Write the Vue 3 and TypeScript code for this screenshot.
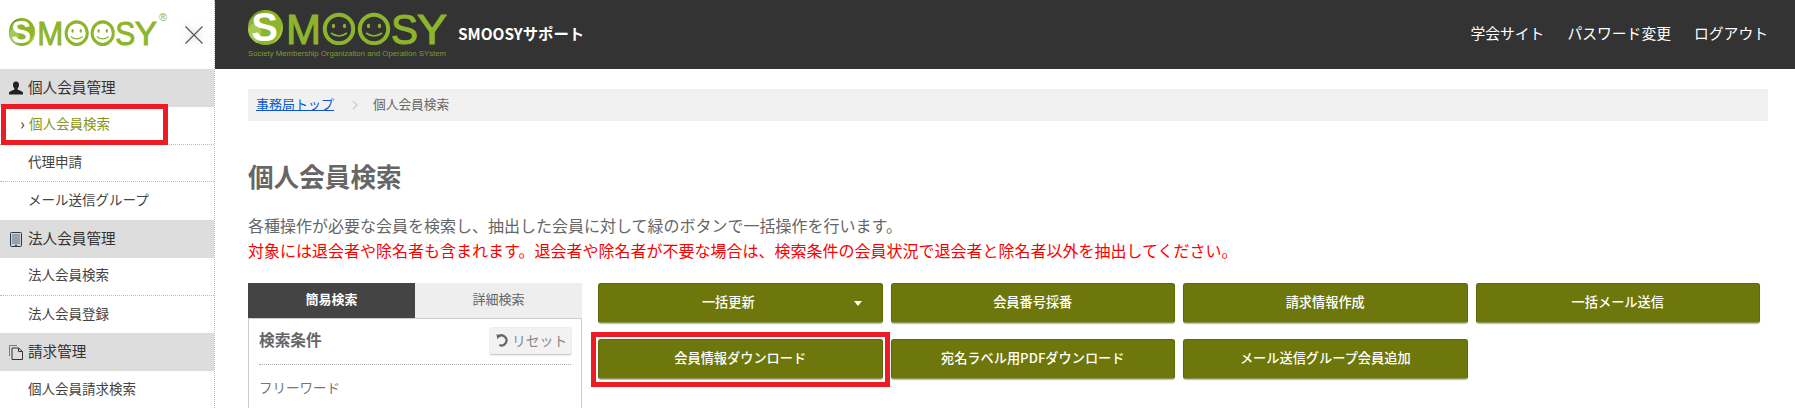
<script setup lang="ts">
interface MenuGroup {
  title: string
  icon: 'user' | 'tablet' | 'file'
  items: { label: string; active?: boolean }[]
}

const menu: MenuGroup[] = [
  {
    title: '個人会員管理',
    icon: 'user',
    items: [{ label: '個人会員検索', active: true }, { label: '代理申請' }, { label: 'メール送信グループ' }]
  },
  {
    title: '法人会員管理',
    icon: 'tablet',
    items: [{ label: '法人会員検索' }, { label: '法人会員登録' }]
  },
  {
    title: '請求管理',
    icon: 'file',
    items: [{ label: '個人会員請求検索' }]
  }
]

const navLinks = ['学会サイト', 'パスワード変更', 'ログアウト']

const actions = [
  { label: '一括更新', caret: true },
  { label: '会員番号採番' },
  { label: '請求情報作成' },
  { label: '一括メール送信' },
  { label: '会員情報ダウンロード', marked: true },
  { label: '宛名ラベル用PDFダウンロード' },
  { label: 'メール送信グループ会員追加' }
]
</script>

<template>
  <div class="page">
    <svg class="defs" width="0" height="0" aria-hidden="true">
      <defs>
        <symbol id="smoosy-mark" viewBox="0 0 199 35" preserveAspectRatio="none">
          <circle cx="17.5" cy="17.5" r="17.5" fill="#8db52c" />
          <path d="M1 12 C6 5 11 3 17 1 C9 0 1 6 0 16 Z" fill="#6f9420" />
          <path d="M0 19 C4 12 9 12 13 20 C14 27 11 31 9 33 C3 30 0 25 0 19 Z" fill="#a8c94e" />
          <path d="M24 34 C30 28 34 22 34 12 C36 22 32 31 24 34 Z" fill="#a8c94e" />
          <text class="logo-s" x="16.5" y="31" text-anchor="middle">S</text>
          <text class="logo-letter" x="38" y="34" textLength="35" lengthAdjust="spacingAndGlyphs">M</text>
          <g fill="none" stroke="#8db52c">
            <circle cx="91" cy="19" r="14.2" stroke-width="4" />
            <circle cx="126" cy="19" r="14.2" stroke-width="4" />
            <path d="M83 23 Q91 29 99 23" stroke-width="1.6" />
            <path d="M118 23 Q126 29 134 23" stroke-width="1.6" />
          </g>
          <g fill="#8db52c">
            <ellipse cx="85.5" cy="16" rx="1.6" ry="2.3" />
            <ellipse cx="96.5" cy="16" rx="1.6" ry="2.3" />
            <ellipse cx="120.5" cy="16" rx="1.6" ry="2.3" />
            <ellipse cx="131.5" cy="16" rx="1.6" ry="2.3" />
          </g>
          <text class="logo-letter" x="143" y="34" textLength="27" lengthAdjust="spacingAndGlyphs">S</text>
          <text class="logo-letter" x="169" y="34" textLength="30" lengthAdjust="spacingAndGlyphs">Y</text>
        </symbol>
      </defs>
    </svg>

    <aside class="sidebar">
      <div class="sidebar__top">
        <div class="sidebar__logo">
          <svg class="sidebar__mark" width="148" height="28"><use href="#smoosy-mark" width="148" height="28" /></svg>
          <span class="sidebar__reg">®</span>
        </div>
        <svg class="sidebar__close" width="18" height="18" viewBox="0 0 18 18">
          <path d="M0.5 0.5 L17.5 17.5 M17.5 0.5 L0.5 17.5" stroke="#555" stroke-width="1.1" fill="none" />
        </svg>
      </div>

      <section v-for="group in menu" :key="group.title">
        <h3 class="group">
          <svg v-if="group.icon === 'user'" class="group__icon" width="14" height="14" viewBox="0 0 14 14">
            <path d="M7 0.5 C9.2 0.5 10.2 2.2 10 4.2 C9.9 5.8 9.2 6.9 8.6 7.6 L8.8 8.8 C10.8 9.6 13.4 10.2 14 11.6 L14 13.5 L0 13.5 L0 11.6 C0.6 10.2 3.2 9.6 5.2 8.8 L5.4 7.6 C4.8 6.9 4.1 5.8 4 4.2 C3.8 2.2 4.8 0.5 7 0.5 Z" fill="#222" />
          </svg>
          <svg v-else-if="group.icon === 'tablet'" class="group__icon" width="14" height="15" viewBox="0 0 14 15">
            <rect x="1.5" y="0.5" width="11" height="14" rx="1" fill="#cdd2d6" stroke="#2a3a48" />
            <rect x="3" y="2" width="8" height="10" fill="#9aa2a8" />
            <rect x="6" y="12.6" width="2" height="1.2" fill="#2a3a48" />
          </svg>
          <svg v-else class="group__icon" width="14" height="15" viewBox="0 0 14 15">
            <path d="M0.5 11 L0.5 0.5 L8 0.5" fill="none" stroke="#8a7a66" stroke-width="1" />
            <path d="M3 14.5 L3 3 L9.5 3 L13.5 6.5 L13.5 14.5 Z M9.5 3 L9.5 6.5 L13.5 6.5" fill="none" stroke="#333" stroke-width="1" />
          </svg>
          <span class="group__title">{{ group.title }}</span>
        </h3>
        <ul class="menu">
          <li v-for="item in group.items" :key="item.label" :class="['menu__item', { 'is-active': item.active }]">
            <span v-if="item.active" class="menu__chevron">›</span>
            <span class="menu__label">{{ item.label }}</span>
            <span v-if="item.active" class="marker marker--menu"></span>
          </li>
        </ul>
      </section>
    </aside>

    <div class="body">
      <header class="topbar">
        <div class="topbar__brand">
          <div class="topbar__logo">
            <svg width="199" height="35"><use href="#smoosy-mark" width="199" height="35" /></svg>
            <span class="topbar__tagline">Society Membership Organization and Operation SYstem</span>
          </div>
          <span class="topbar__name">SMOOSYサポート</span>
        </div>
        <nav class="topbar__nav">
          <a v-for="link in navLinks" :key="link">{{ link }}</a>
        </nav>
      </header>

      <main class="content">
        <div class="crumbs">
          <a class="crumbs__link">事務局トップ</a>
          <svg class="crumbs__sep" width="6" height="10" viewBox="0 0 6 10">
            <path d="M1 1 L5 5 L1 9" fill="none" stroke="#ccc" stroke-width="1.4" />
          </svg>
          <span class="crumbs__current">個人会員検索</span>
        </div>

        <h1 class="title">個人会員検索</h1>
        <p class="lead">各種操作が必要な会員を検索し、抽出した会員に対して緑のボタンで一括操作を行います。</p>
        <p class="lead lead--warn">対象には退会者や除名者も含まれます。退会者や除名者が不要な場合は、検索条件の会員状況で退会者と除名者以外を抽出してください。</p>

        <div class="search">
          <div class="search__side">
            <div class="tabs">
              <div class="tabs__tab is-current">簡易検索</div>
              <div class="tabs__tab">詳細検索</div>
            </div>
            <div class="panel">
              <div class="panel__head">
                <span class="panel__title">検索条件</span>
                <button class="reset">
                  <svg width="13" height="13" viewBox="0 0 13 13">
                    <path d="M2.2 2.6 A5 5 0 1 1 3.4 11" fill="none" stroke="#666" stroke-width="2.2" />
                    <path d="M0.4 0.6 L5.4 0.8 L1.4 5.2 Z" fill="#666" />
                  </svg>
                  リセット
                </button>
              </div>
              <div class="panel__label">フリーワード</div>
            </div>
          </div>

          <div class="actions">
            <button v-for="action in actions" :key="action.label" class="action">
              <span class="action__label">{{ action.label }}</span>
              <span v-if="action.caret" class="action__caret"></span>
              <span v-if="action.marked" class="marker marker--action"></span>
            </button>
          </div>
        </div>
      </main>
    </div>
  </div>
</template>

<style>
html,
body {
  margin: 0;
  height: 408px;
  overflow: hidden;
  background: #fff;
}
</style>

<style scoped>
.page {
  display: flex;
  height: 408px;
  overflow: hidden;
  font-family: "Noto Sans CJK JP", "Noto Sans", sans-serif;
  color: #666;
}

.defs {
  position: absolute;
}

.logo-s {
  font-family: "Liberation Sans", sans-serif;
  font-weight: 700;
  font-size: 40px;
  fill: #fff;
}

.logo-letter {
  font-family: "Liberation Sans", sans-serif;
  font-size: 42px;
  fill: #8db52c;
  stroke: #8db52c;
  stroke-width: 1.1px;
}

.sidebar {
  flex: 0 0 215px;
  box-sizing: border-box;
  border-right: 1px dotted #bbb;
}

.sidebar__top {
  display: flex;
  align-items: center;
  justify-content: space-between;
  height: 69px;
  padding: 0 11px 0 9px;
  box-sizing: border-box;
}

.sidebar__logo {
  position: relative;
  display: flex;
  margin-top: -5px;
}

.sidebar__reg {
  position: absolute;
  top: -7px;
  left: 150px;
  font: 11px "Liberation Sans", sans-serif;
  color: #8db52c;
}

.sidebar__close {
  margin-top: 1px;
  filter: drop-shadow(0 0 3px rgba(0, 0, 0, 0.25));
}

.group {
  display: flex;
  align-items: center;
  gap: 5px;
  height: 38px;
  margin: 0;
  padding-left: 9px;
  box-sizing: border-box;
  background: #ddd;
  font-size: 14.6px;
  font-weight: 400;
  color: #333;
}

.group__icon {
  flex: none;
}

.group__title {
  margin-bottom: 3px;
}

.menu {
  list-style: none;
  margin: 0;
  padding: 0;
}

.menu__item {
  position: relative;
  display: flex;
  align-items: center;
  height: 37.7px;
  padding-left: 28px;
  box-sizing: border-box;
  border-bottom: 1px dotted #bbb;
  font-size: 13.5px;
  color: #444;
}

.menu__item:last-child {
  border-bottom: 0;
}

.menu__label {
  margin-bottom: 4px;
}

.menu__item.is-active {
  color: #8a9410;
}

.menu__item.is-active .menu__label {
  margin-left: 1px;
}

.menu__chevron {
  position: absolute;
  left: 20px;
  top: 4px;
  font-size: 16px;
  color: #445;
}

.marker {
  position: absolute;
  box-sizing: border-box;
  border: 5px solid #ed1c24;
  pointer-events: none;
}

.marker--menu {
  left: 1px;
  top: -3px;
  width: 167px;
  height: 41px;
}

.marker--action {
  inset: -8px -8px -9px -8px;
}

.body {
  flex: 1;
  min-width: 0;
}

.topbar {
  display: flex;
  align-items: center;
  justify-content: space-between;
  height: 69px;
  padding: 0 27px 0 33px;
  background: #333;
  color: #fff;
}

.topbar__brand {
  display: flex;
  align-items: center;
  gap: 11px;
}

.topbar__logo {
  display: flex;
  flex-direction: column;
}

.topbar__tagline {
  width: 199px;
  margin-top: 3px;
  font: 7.8px/11px "Liberation Sans", sans-serif;
  color: #7f9a2c;
  white-space: nowrap;
}

.topbar__name {
  margin-top: -4px;
  font-size: 15.4px;
  font-weight: 700;
}

.topbar__nav {
  display: flex;
  gap: 23px;
  margin-top: -5px;
  font-size: 14.8px;
}

.content {
  padding: 20px 27px 0 33px;
}

.crumbs {
  display: flex;
  align-items: center;
  height: 32px;
  padding: 0 0 3px 8px;
  box-sizing: border-box;
  background: #f1f1f1;
  font-size: 13px;
  color: #666;
}

.crumbs__link {
  color: #0b57d0;
  text-decoration: underline;
}

.crumbs__sep {
  margin: 3px 15px 0 18px;
}

.crumbs__current {
  font-size: 12.7px;
}

.title {
  margin: 39px 0 0;
  font-size: 25.6px;
  line-height: 32px;
  font-weight: 700;
  color: #666;
}

.lead {
  margin: 0;
  font-size: 16px;
  line-height: 25px;
  white-space: nowrap;
}

.title + .lead {
  margin-top: 21px;
}

.lead--warn {
  color: #f00;
}

.search {
  display: grid;
  grid-template-columns: 334px 1fr;
  column-gap: 16px;
  margin-top: 20px;
}

.tabs {
  display: grid;
  grid-template-columns: 167px 167px;
}

.tabs__tab {
  display: flex;
  align-items: center;
  justify-content: center;
  height: 35px;
  padding-bottom: 4px;
  box-sizing: border-box;
  background: #eee;
  font-size: 13px;
  color: #666;
}

.tabs__tab.is-current {
  background: #444;
  color: #fff;
  font-weight: 700;
}

.panel {
  height: 90px;
  padding: 9px 10px 0 10px;
  border: 1px solid #ccc;
}

.panel__head {
  display: flex;
  align-items: center;
  justify-content: space-between;
  padding-bottom: 9px;
  border-bottom: 1px dotted #aaa;
}

.panel__title {
  margin-bottom: 4px;
  font-size: 15.7px;
  font-weight: 700;
}

.reset {
  display: flex;
  align-items: center;
  gap: 3px;
  height: 27px;
  width: 81px;
  padding: 0 0 2px 6px;
  border: 0;
  border-bottom: 1px solid #ccc;
  border-radius: 2px;
  background: #f2f2f2;
  box-shadow: 0 0 0 1px #eee;
  font-family: inherit;
  font-size: 13.8px;
  color: #888;
}

.panel__label {
  margin-top: 12px;
  font-size: 13.5px;
  color: #777;
}

.actions {
  display: grid;
  grid-template-columns: repeat(4, 1fr);
  grid-auto-rows: 40px;
  gap: 16px 8px;
  padding-right: 8px;
  align-content: start;
}

.action {
  position: relative;
  display: flex;
  align-items: center;
  padding: 0 20px 3px;
  border: 1px solid #5f6708;
  border-bottom-color: #8d9350;
  border-radius: 3px;
  background: #6e770b;
  box-shadow: 0 1px 1px #bbb;
  font-family: inherit;
  font-size: 13.2px;
  font-weight: 500;
  color: #fff;
}

.action__label {
  flex: 1;
  text-align: center;
}

.action__caret {
  width: 0;
  height: 0;
  margin: 3px 0 0 16px;
  border-top: 5px solid #fff;
  border-left: 4px solid transparent;
  border-right: 4px solid transparent;
}
</style>
